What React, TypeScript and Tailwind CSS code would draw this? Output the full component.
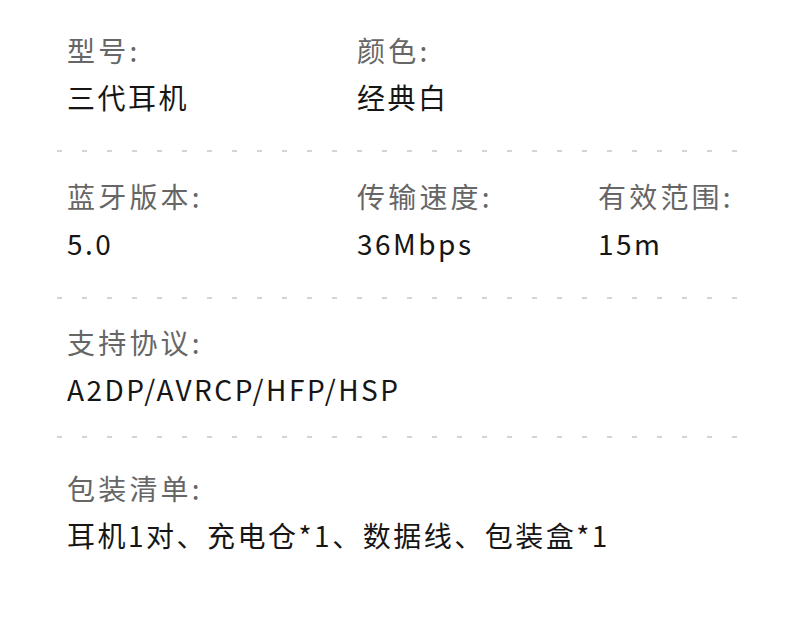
import React from "react";

interface Spec {
  label: string;
  value: string;
}

const rows: { items: Spec[]; className: string }[] = [
  {
    items: [
      { label: "型号:", value: "三代耳机" },
      { label: "颜色:", value: "经典白" },
    ],
    className: "pt-[26px] pb-[30px]",
  },
  {
    items: [
      { label: "蓝牙版本:", value: "5.0" },
      { label: "传输速度:", value: "36Mbps" },
      { label: "有效范围:", value: "15m" },
    ],
    className: "pt-[20px] pb-[31px]",
  },
  {
    items: [{ label: "支持协议:", value: "A2DP/AVRCP/HFP/HSP" }],
    className: "pt-[19px] pb-[24px]",
  },
  {
    items: [{ label: "包装清单:", value: "耳机1对、充电仓*1、数据线、包装盒*1" }],
    className: "pt-[26px] pb-[40px]",
  },
];

const colWidths = ["w-[290px]", "w-[241px]", "w-[160px]"];

function Dashes() {
  return (
    <div className="ml-[57px] w-[692px] h-[2px] bg-[repeating-linear-gradient(to_right,#d4d4d4_0_5px,transparent_5px_25px)]" />
  );
}

export default function App() {
  return (
    <div
      className="w-[800px] h-[624px] bg-white overflow-hidden"
      style={{ fontFamily: '"Noto Sans CJK SC", "Noto Sans", sans-serif' }}
    >
      {rows.map((row, i) => (
        <div key={i}>
          <div className={`flex pl-[67px] ${row.className}`}>
            {row.items.map((item, j) => (
              <div key={item.label} className={row.items.length > 1 ? colWidths[j] : ""}>
                <div className="text-[28px] leading-[48px] tracking-[3.2px] text-[#666666] whitespace-nowrap">
                  {item.label}
                </div>
                <div className="text-[28px] leading-[46px] tracking-[2.5px] text-[#161616] whitespace-nowrap">
                  {item.value}
                </div>
              </div>
            ))}
          </div>
          {i < rows.length - 1 && <Dashes />}
        </div>
      ))}
    </div>
  );
}
